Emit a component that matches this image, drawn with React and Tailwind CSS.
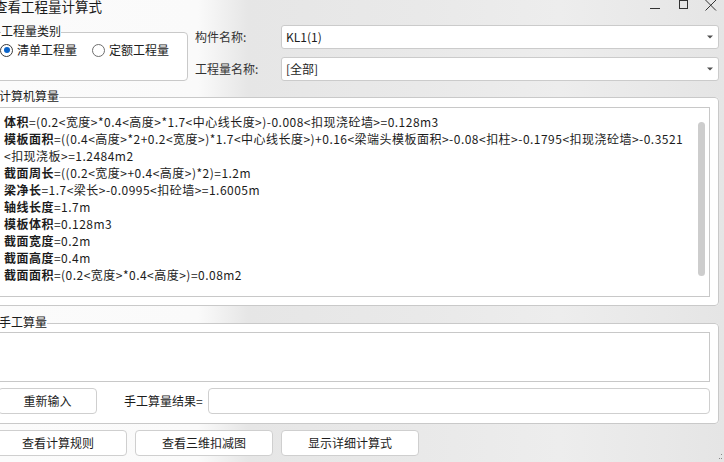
import { useState } from "react";

const FONT = "font-['Noto_Sans_CJK_SC','Microsoft_YaHei',sans-serif]";

const LINES = [
  ["体积", "=(0.2<宽度>*0.4<高度>*1.7<中心线长度>)-0.008<扣现浇砼墙>=0.128m3"],
  ["模板面积", "=((0.4<高度>*2+0.2<宽度>)*1.7<中心线长度>)+0.16<梁端头模板面积>-0.08<扣柱>-0.1795<扣现浇砼墙>-0.3521"],
  ["", "<扣现浇板>=1.2484m2"],
  ["截面周长", "=((0.2<宽度>+0.4<高度>)*2)=1.2m"],
  ["梁净长", "=1.7<梁长>-0.0995<扣砼墙>=1.6005m"],
  ["轴线长度", "=1.7m"],
  ["模板体积", "=0.128m3"],
  ["截面宽度", "=0.2m"],
  ["截面高度", "=0.4m"],
  ["截面面积", "=(0.2<宽度>*0.4<高度>)=0.08m2"],
];

function Radio({ checked, label, onClick }) {
  return (
    <button onClick={onClick} className="flex items-center gap-[4px] h-[18px]">
      <span
        className={
          "w-[13px] h-[13px] rounded-full border flex items-center justify-center bg-white " +
          (checked ? "border-[#3a3a3a]" : "border-[#6e6e6e]")
        }
      >
        {checked && <span className="w-[6px] h-[6px] rounded-full bg-[#0a63c9]" />}
      </span>
      <span className="leading-[18px]">{label}</span>
    </button>
  );
}

function Select({ value }) {
  return (
    <div className="h-[24px] flex-1 flex items-center justify-between bg-white border border-[#cbcbcb] rounded-[3px] pl-[4px] pr-[5px]">
      <span className="leading-[22px]">{value}</span>
      <svg width="6" height="4" viewBox="0 0 6 4">
        <path d="M0 0.5 H6 L3 3.5 Z" fill="#505050" />
      </svg>
    </div>
  );
}

function Btn({ children, className = "" }) {
  return (
    <button
      className={
        "h-[26px] bg-white border border-[#cfcfcf] rounded-[4px] leading-[24px] text-center " + className
      }
    >
      {children}
    </button>
  );
}

export default function App() {
  const [kind, setKind] = useState("qd");
  const [manual, setManual] = useState("");

  return (
    <div
      className={
        "relative w-[724px] h-[462px] overflow-hidden text-[12px] text-[#1c1c1c] " +
        FONT +
        " bg-[linear-gradient(90deg,#fbfbfb_0px,#fafafa_198px,#e6e6e6_248px,#e9e9e9_420px,#ededed_560px,#e5e5e5_724px)]"
      }
    >
      {/* title bar */}
      <div className="flex items-start h-[24px]">
        <div className="ml-[-6px] mt-[-1px] text-[13.5px] leading-[14px] text-[#1a1a1a]">查看工程量计算式</div>
        <div className="flex-1" />
        <svg width="70" height="12" viewBox="0 0 70 12" className="mr-[6px] mt-[-1px]">
          <path d="M2 9.5 H12" stroke="#333" strokeWidth="1" />
          <rect x="31.5" y="1.5" width="8" height="8" fill="none" stroke="#333" strokeWidth="1" />
          <path d="M57.5 1 L68 11.5 M68 1 L57.5 11.5" stroke="#333" strokeWidth="1" />
        </svg>
      </div>

      {/* top section */}
      <div className="flex items-start">
        <fieldset className="ml-[-8px] w-[196px] h-[57px] border border-[#c9c9c9] rounded-[4px] pl-[5px] bg-white">
          <legend className="ml-[3px] leading-[13px] pb-[3px]">工程量类别</legend>
          <div className="flex items-center gap-[15px] ml-[2px] pt-[1px]">
            <Radio checked={kind === "qd"} label="清单工程量" onClick={() => setKind("qd")} />
            <Radio checked={kind === "de"} label="定额工程量" onClick={() => setKind("de")} />
          </div>
        </fieldset>
        <div className="ml-[7px] pt-[1px] flex-1 mr-[5px] flex flex-col gap-[8px]">
          <div className="flex items-center">
            <span className="w-[86px] text-[#333]">构件名称:</span>
            <Select value="KL1(1)" />
          </div>
          <div className="flex items-center">
            <span className="w-[86px] text-[#333]">工程量名称:</span>
            <Select value="[全部]" />
          </div>
        </div>
      </div>

      {/* computer calc */}
      <fieldset className="mt-[8px] ml-[-8px] w-[727px] border border-[#c9c9c9] rounded-[4px] pl-[5px] pr-[8px] pb-[8px] bg-white">
        <legend className="ml-[1px] leading-[13px] pb-[3px]">计算机算量</legend>
        <div className="mt-[2px] h-[190px] border border-[#c8c8c8] bg-white flex">
          <div className="flex-1 pl-[5px] pt-[5px] leading-[17px] tracking-[0.48px] whitespace-nowrap overflow-hidden">
            {LINES.map(([k, v], i) => (
              <div key={i}>
                {k && <span className="font-bold">{k}</span>}
                {v}
              </div>
            ))}
          </div>
          <div className="w-[7px] h-[154px] mt-[14px] mr-[4px] rounded-full bg-[#cdcdcd]" />
        </div>
      </fieldset>

      {/* manual calc */}
      <fieldset className="mt-[9px] ml-[-8px] w-[727px] border border-[#c9c9c9] rounded-[4px] pl-[5px] pr-[8px] pb-[9px] bg-white">
        <legend className="ml-[1px] leading-[13px] pb-[3px]">手工算量</legend>
        <textarea
          value={manual}
          onChange={(e) => setManual(e.target.value)}
          className="block mt-[1px] w-full h-[50px] border border-[#c8c8c8] bg-white outline-none resize-none"
        />
        <div className="mt-[6px] flex items-center">
          <Btn className="w-[99px]">重新输入</Btn>
          <span className="ml-[27px]">手工算量结果=</span>
          <input className="ml-[5px] flex-1 h-[26px] bg-white border border-[#cfcfcf] rounded-[4px] outline-none px-[4px]" />
        </div>
      </fieldset>

      {/* bottom buttons */}
      <div className="mt-[6px] ml-[-11px] flex gap-[8px]">
        <Btn className="w-[138px]">查看计算规则</Btn>
        <Btn className="w-[138px]">查看三维扣减图</Btn>
        <Btn className="w-[138px]">显示详细计算式</Btn>
      </div>

      <svg width="4" height="6" viewBox="0 0 4 6" className="absolute right-[1px] bottom-[2px]">
        <rect x="2" y="0" width="1" height="1" fill="#888" />
        <rect x="0" y="4" width="1" height="1" fill="#888" />
        <rect x="2" y="4" width="1" height="1" fill="#888" />
      </svg>
    </div>
  );
}
